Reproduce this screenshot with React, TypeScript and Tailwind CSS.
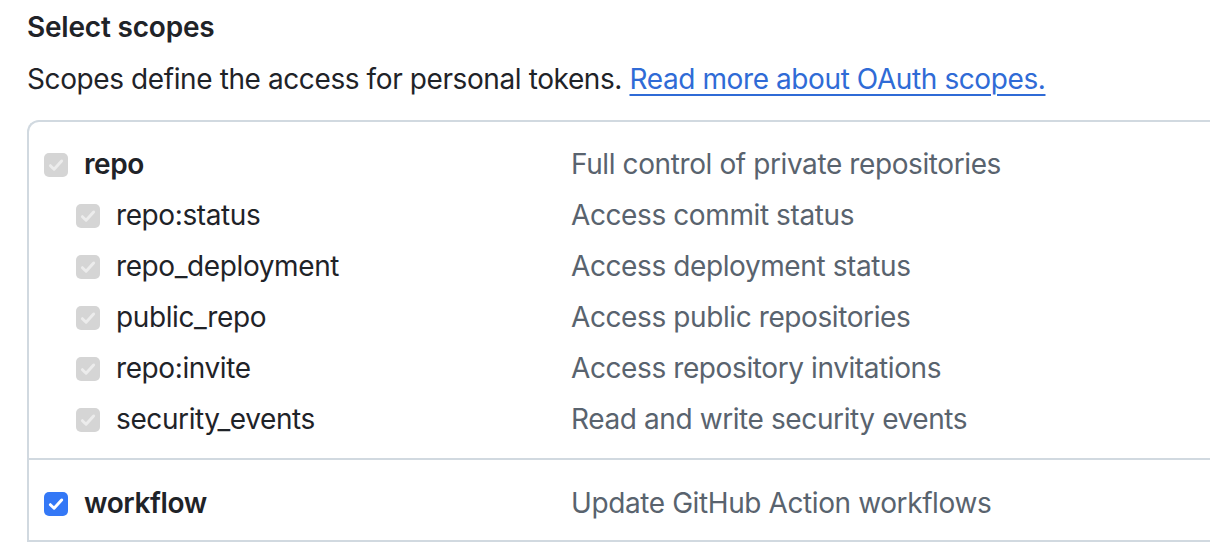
import React from "react";

type Scope = {
  name: string;
  description: string;
  checked: boolean;
  disabled?: boolean;
  children?: { name: string; description: string }[];
};

const scopes: Scope[] = [
  {
    name: "repo",
    description: "Full control of private repositories",
    checked: true,
    disabled: true,
    children: [
      { name: "repo:status", description: "Access commit status" },
      { name: "repo_deployment", description: "Access deployment status" },
      { name: "public_repo", description: "Access public repositories" },
      { name: "repo:invite", description: "Access repository invitations" },
      { name: "security_events", description: "Read and write security events" },
    ],
  },
  {
    name: "workflow",
    description: "Update GitHub Action workflows",
    checked: true,
  },
];

const CheckBox = ({ disabled }: { disabled?: boolean }) => (
  <span
    className={
      disabled
        ? "flex h-[24px] w-[24px] shrink-0 items-center justify-center rounded-[5px] bg-[#d5d5d5]"
        : "flex h-[24px] w-[24px] shrink-0 items-center justify-center rounded-[5px] bg-[#3478f6]"
    }
  >
    <svg width="18" height="18" viewBox="0 0 16 16" fill="none">
      <path
        d="M3 8.6 L6.3 11.8 L13 4.4"
        stroke={disabled ? "#ececec" : "#ffffff"}
        strokeWidth="2.6"
        strokeLinecap="round"
        strokeLinejoin="round"
      />
    </svg>
  </span>
);

const ScopeRow = ({
  name,
  description,
  disabled,
  bold,
  nested,
}: {
  name: string;
  description: string;
  disabled?: boolean;
  bold?: boolean;
  nested?: boolean;
}) => (
  <div className="flex h-[51px] items-center">
    <div className={nested ? "flex w-[542px] items-center gap-[16px] pl-[47px]" : "flex w-[542px] items-center gap-[16px] pl-[15px]"}>
      <CheckBox disabled={disabled} />
      <span className={bold ? "font-semibold text-[#1f2328]" : "text-[#1f2328]"}>{name}</span>
    </div>
    <span className="text-[#59636e]">{description}</span>
  </div>
);

export default function App() {
  return (
    <div
      className="h-[546px] w-[1210px] overflow-hidden bg-white pl-[27px] text-[28px] leading-[1.25] tracking-[-0.4px] antialiased"
      style={{ fontFamily: "Inter, 'Noto Sans', sans-serif" }}
    >
      <h3 className="pt-[10px] font-semibold tracking-[-0.2px] text-[#1f2328]">Select scopes</h3>
      <p className="mt-[17px] text-[#1f2328]">
        Scopes define the access for personal tokens.{" "}
        <a href="#" className="text-[#2f6bd6] underline decoration-[2px] underline-offset-[5px]">
          Read more about OAuth scopes.
        </a>
      </p>
      <div className="mt-[23px] w-[1220px] rounded-tl-[12px] border-l-2 border-t-2 border-[#d1d9e0]">
        <div className="border-b-2 border-[#d1d9e0] pb-[13px] pt-[17px]">
          <ScopeRow
            name={scopes[0].name}
            description={scopes[0].description}
            disabled={scopes[0].disabled}
            bold
          />
          {scopes[0].children?.map((child) => (
            <ScopeRow
              key={child.name}
              name={child.name}
              description={child.description}
              disabled={scopes[0].disabled}
              nested
            />
          ))}
        </div>
        <div className="border-b-2 border-[#d1d9e0] pb-[11px] pt-[18px]">
          <ScopeRow name={scopes[1].name} description={scopes[1].description} bold />
        </div>
      </div>
    </div>
  );
}
